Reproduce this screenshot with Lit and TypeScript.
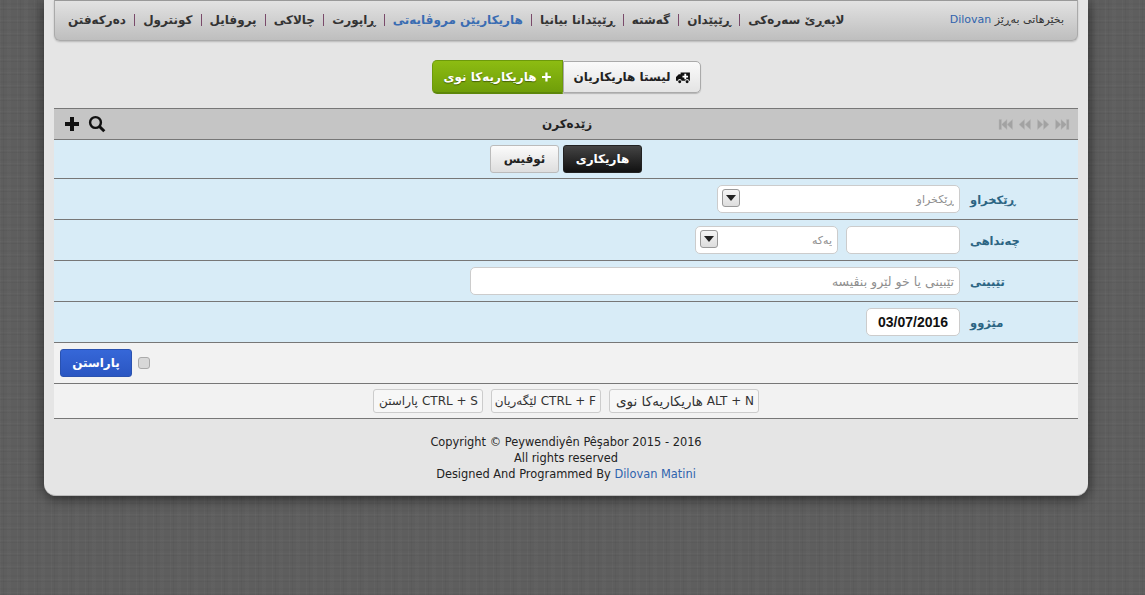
import { LitElement, html, css, svg } from "lit";
import { customElement } from "lit/decorators.js";

const NAV = ["لاپەڕێ سەرەکی","ڕێپێدان","گەشتە","ڕێپێدانا بیانیا","هاریکاریێن مروڤایەتی","ڕاپورت","چالاکی","پروفایل","کونترول","دەرکەفتن"];

const pager = (d: string) => svg`<svg class="pg" width="15" height="11" viewBox="0 0 15 11"><path d=${d} fill="#a2a2a2" stroke="#b4b4b4" stroke-width=".5"/></svg>`;

@customElement("app-root")
export class AppRoot extends LitElement {
  static styles = css`
    :host { display: block; height: 595px; overflow: hidden; font-family: "DejaVu Sans", sans-serif; font-size: 12px; color: #222;
      background-color: #5e5e5e;
      background-image:
        repeating-linear-gradient(0deg, rgba(0,0,0,.04) 0 1px, transparent 1px 2px, rgba(255,255,255,.02) 2px 3px, transparent 3px 5px, rgba(0,0,0,.025) 5px 7px, transparent 7px 13px),
        repeating-linear-gradient(90deg, rgba(255,255,255,.025) 0 1px, transparent 1px 3px, rgba(0,0,0,.035) 3px 4px, transparent 4px 7px, rgba(255,255,255,.015) 7px 11px, transparent 11px 17px); }
    * { box-sizing: border-box; }
    .wrap { direction: rtl; margin-left: 44px; width: 1044px; height: 496px; padding: 0 10px; background: #e5e5e5; border-radius: 0 0 12px 12px; box-shadow: 0 2px 14px rgba(0,0,0,.6); border-bottom: 1px solid #bbb; }
    .nav { height: 41px; display: flex; align-items: center; justify-content: space-between; padding: 0 13px 2px 13px; border: 1px solid #aaa; border-top-color: #999; border-radius: 0 0 6px 6px; background: linear-gradient(#e2e2e2, #bebebe); box-shadow: 0 1px 2px rgba(0,0,0,.2); }
    .hello { font-size: 11px; color: #333; }
    .hello a, .foot a { color: #2f63ad; }
    .links { display: flex; align-items: center; font-size: 12px; font-weight: 700; color: #333; }
    .links .sep { width: 1px; height: 12px; background: #7a4a6a; margin: 0 8.1px; }
    .links .on { color: #3a6cb2; }
    .actions { display: flex; justify-content: center; padding: 19px 0 14px; height: 67px; }
    .btn { display: flex; align-items: center; gap: 5px; font-weight: 700; font-size: 12px; white-space: nowrap; }
    .list { height: 32px; margin-top: 1px; padding: 0 10px; border: 1px solid #aaa; border-radius: 0 5px 5px 0; background: linear-gradient(#fafafa, #e4e4e4); color: #222; box-shadow: 0 1px 1px rgba(0,0,0,.2); width: 138px; }
    .green { height: 34px; padding: 0 11px; width: 131px; border-radius: 5px 0 0 5px; background: linear-gradient(#8dbc12, #6f9e09); color: #fff; border: 1px solid #6d9a0b; border-bottom: 2px solid #5d870a; text-shadow: 0 1px 1px rgba(0,0,0,.4); }
    .bar { display: grid; grid-template-columns: 1fr auto 1fr; align-items: center; height: 32px; padding: 0 8px 0 10px; background: #c5c5c5; border-top: 1px solid #777; border-bottom: 1px solid #777; font-weight: 700; font-size: 12px; }
    .pager { display: flex; gap: 4px; direction: ltr; justify-content: flex-end; }
    .tools { display: flex; direction: ltr; gap: 8px; align-items: center; }
    .row { display: flex; align-items: center; height: 41px; background: #d8ecf7; border-bottom: 1px solid #777; gap: 8px; }
    .row.tabs { height: 39px; justify-content: center; gap: 4px; }
    .lab { width: 108px; margin-left: 2px; text-align: left; font-size: 11.5px; font-weight: 700; color: #2c6583; white-space: nowrap; padding-top: 1px; }
    .tab { height: 28px; display: flex; align-items: center; justify-content: center; font-weight: 700; font-size: 12px; border-radius: 3px; }
    .tab.dark { width: 79px; background: linear-gradient(#444, #111); color: #fff; border: 1px solid #222; }
    .tab.light { width: 69px; background: linear-gradient(#fbfbfb, #dedede); color: #222; border: 1px solid #bbb; }
    input[type="text"] { height: 28px; border: 1px solid #ccc; border-radius: 5px; background: #fff; padding: 0 5px; font: 11px "DejaVu Sans", sans-serif; direction: rtl; outline: none; }
    input::placeholder { color: #8f8f8f; }
    input.big { font-size: 12.5px; }
    .w114 { width: 114px; }
    .w490 { width: 490px; }
    .sel { position: relative; display: flex; height: 28px; }
    .sel.w243 { width: 243px; }
    .sel.w143 { width: 143px; }
    .sel input { width: 100%; }
    .caret { position: absolute; left: 5px; top: 4px; width: 18px; height: 18px; border: 1px solid #999; border-radius: 3px; background: linear-gradient(#f5f5f5, #ddd); display: flex; align-items: center; justify-content: center; }
    input.date { width: 94px; font: 700 14px "Liberation Sans", sans-serif; color: #111; text-align: center; direction: ltr; }
    .save { height: 41px; display: flex; direction: ltr; align-items: center; gap: 6px; padding-left: 6px; background: #f2f2f2; border-bottom: 1px solid #777; }
    .blue { width: 72px; height: 28px; border-radius: 3px; display: flex; align-items: center; justify-content: center; background: linear-gradient(#3667d8, #2a56c2); border: 1px solid #2a52b0; color: #fff; font-weight: 700; font-size: 12px; }
    .chk { width: 12px; height: 12px; border: 1px solid #aaa; border-radius: 3px; background: #d8d8d8; }
    .keys { height: 35px; display: flex; justify-content: center; align-items: center; gap: 8px; background: #f2f2f2; border-bottom: 1px solid #777; }
    .key { height: 24px; width: 110px; display: flex; align-items: center; gap: 4px; padding: 0 4px; border: 1px solid #ccc; border-radius: 3px; background: #f7f7f7; font-size: 12px; color: #333; white-space: nowrap; }
    .key.wide { width: 150px; }
    .key.wide .ar { font-size: 13.5px; }
    .key .en { direction: ltr; }
    .foot { direction: ltr; padding-top: 15px; text-align: center; font-size: 11.4px; line-height: 16px; color: #222; }
  `;

  render() {
    const links: unknown[] = [];
    NAV.forEach((n, i) => {
      if (i) links.push(html`<span class="sep"></span>`);
      links.push(html`<span class=${i === 4 ? "on" : ""}>${n}</span>`);
    });
    const caret = html`<span class="caret"><svg width="10" height="6" viewBox="0 0 10 6"><path d="M0 0h10L5 6z" fill="#222"/></svg></span>`;
    return html`<div class="wrap">
      <div class="nav">
        <div class="hello">بخێرهاتی بەڕێز <a>Dilovan</a></div>
        <div class="links">${links}</div>
      </div>
      <div class="actions">
        <div class="btn list">
          <svg width="15" height="13" viewBox="0 0 15 13"><path fill="#111" d="M5 1h10v9h-1a2 2 0 0 0-4 0H6a2 2 0 0 0-4 0H0V6l3-3h2z"/><path fill="#fff" d="M9 2.5h2v2h2v2h-2v2H9v-2H7v-2h2z"/><circle cx="4" cy="11" r="1.6" fill="#111"/><circle cx="12" cy="11" r="1.6" fill="#111"/></svg>
          <span>لیستا هاریکاریان</span>
        </div>
        <div class="btn green">
          <svg width="12" height="12" viewBox="0 0 12 12"><path fill="#fff" d="M4.5 0h3v4.5H12v3H7.5V12h-3V7.5H0v-3h4.5z"/></svg>
          <span>هاریکاریەکا نوی</span>
        </div>
      </div>
      <div class="bar">
        <div class="pager">
          ${pager("M1 .5h2.5v10H1zM9 .5v10L3.5 5.5zM14.5 .5v10L9 5.5z")}
          ${pager("M7.5 .5v10L2 5.5zM13.5 .5v10L8 5.5z")}
          ${pager("M1.5 .5v10L7 5.5zM7.5 .5v10L13 5.5z")}
          ${pager("M.5 .5v10L6 5.5zM6 .5v10l5.5-5zM11.5 .5H14v10h-2.5z")}
        </div>
        <div>زێدەکرن</div>
        <div class="tools">
          <svg width="16" height="16" viewBox="0 0 16 16"><path fill="#111" d="M6 1h4v5h5v4h-5v5H6v-5H1V6h5z"/></svg>
          <svg width="18" height="18" viewBox="0 0 18 18"><circle cx="7.5" cy="7.5" r="5.4" fill="none" stroke="#111" stroke-width="2.4"/><path d="M11.5 11.5l4.8 4.8" stroke="#111" stroke-width="3"/></svg>
        </div>
      </div>
      <div class="row tabs"><div class="tab dark">هاریکاری</div><div class="tab light">ئوفیس</div></div>
      <div class="row"><span class="lab">ڕێکخراو</span><div class="sel w243"><input type="text" placeholder="ڕێکخراو">${caret}</div></div>
      <div class="row"><span class="lab">چەنداهی</span><input class="w114" type="text"><div class="sel w143"><input type="text" placeholder="یەکە">${caret}</div></div>
      <div class="row"><span class="lab">تێبینی</span><input class="w490 big" type="text" placeholder="تێبینی یا خو لێرو بنڤیسە"></div>
      <div class="row"><span class="lab">مێژوو</span><input class="date" type="text" value="03/07/2016"></div>
      <div class="save"><div class="blue">پاراستن</div><div class="chk"></div></div>
      <div class="keys">
        <span class="key wide"><span class="en">ALT + N</span><span class="ar">هاریکاریەکا نوی</span></span>
        <span class="key"><span class="en">CTRL + F</span><span>لێگەریان</span></span>
        <span class="key"><span class="en">CTRL + S</span><span>پاراستن</span></span>
      </div>
      <div class="foot">Copyright © Peywendiyên Pêşabor 2015 - 2016<br>All rights reserved<br>Designed And Programmed By <a>Dilovan Matini</a></div>
    </div>`;
  }
}
